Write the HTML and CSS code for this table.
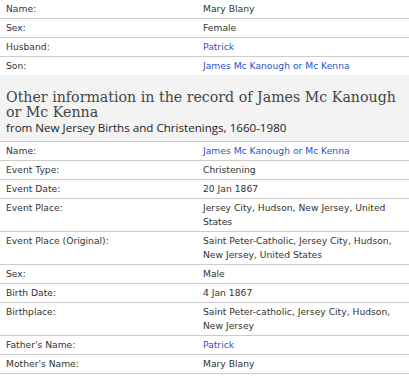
FILE: index.html
```html
<!DOCTYPE html>
<html>
<head>
<meta charset="utf-8">
<link rel="stylesheet" href="styles.css">
</head>
<body>
<div class="record">
  <div class="row"><div class="label">Name:</div><div class="value">Mary Blany</div></div>
  <div class="row"><div class="label">Sex:</div><div class="value">Female</div></div>
  <div class="row"><div class="label">Husband:</div><div class="value"><a href="#">Patrick</a></div></div>
  <div class="row last"><div class="label">Son:</div><div class="value"><a href="#">James Mc Kanough or Mc Kenna</a></div></div>
</div>
<div class="section">
  <h2 class="section-title">Other information in the record of James Mc Kanough or Mc Kenna</h2>
  <div class="section-sub">from New Jersey Births and Christenings, 1660-1980</div>
</div>
<div class="record">
  <div class="row"><div class="label">Name:</div><div class="value"><a href="#">James Mc Kanough or Mc Kenna</a></div></div>
  <div class="row"><div class="label">Event Type:</div><div class="value">Christening</div></div>
  <div class="row"><div class="label">Event Date:</div><div class="value">20 Jan 1867</div></div>
  <div class="row"><div class="label">Event Place:</div><div class="value">Jersey City, Hudson, New Jersey, United States</div></div>
  <div class="row"><div class="label">Event Place (Original):</div><div class="value">Saint Peter-Catholic, Jersey City, Hudson, New Jersey, United States</div></div>
  <div class="row"><div class="label">Sex:</div><div class="value">Male</div></div>
  <div class="row"><div class="label">Birth Date:</div><div class="value">4 Jan 1867</div></div>
  <div class="row"><div class="label">Birthplace:</div><div class="value">Saint Peter-catholic, Jersey City, Hudson, New Jersey</div></div>
  <div class="row"><div class="label">Father's Name:</div><div class="value"><a href="#">Patrick</a></div></div>
  <div class="row"><div class="label">Mother's Name:</div><div class="value">Mary Blany</div></div>
</div>
</body>
</html>
```
FILE: styles.css
```css
html, body {
  margin: 0;
  padding: 0;
  background: #fff;
}
body {
  font-family: "DejaVu Sans", Verdana, sans-serif;
  font-size: 9.2px;
  color: #333;
  width: 409px;
}
.record {
  display: flex;
  flex-direction: column;
}
.row {
  display: grid;
  grid-template-columns: 197px 1fr;
  border-bottom: 1px solid #ccc;
  line-height: 14px;
}
.row.last {
  border-bottom: none;
}
.label {
  padding: 2px 6px;
}
.value {
  padding: 2px 6px 2px 6px;
}
.value a {
  color: #1f55cf;
  text-decoration: none;
}
.section {
  background: #f3f3f3;
  border-bottom: 1px solid #ccc;
  padding: 15px 6px 6px 6px;
}
.section-title {
  margin: 0;
  font-family: "DejaVu Serif", "Liberation Serif", serif;
  font-weight: normal;
  font-size: 14.2px;
  line-height: 15px;
  color: #444;
}
.section-sub {
  font-family: "Open Sans", sans-serif;
  font-size: 11.6px;
  line-height: 15px;
  color: #222;
}
```
